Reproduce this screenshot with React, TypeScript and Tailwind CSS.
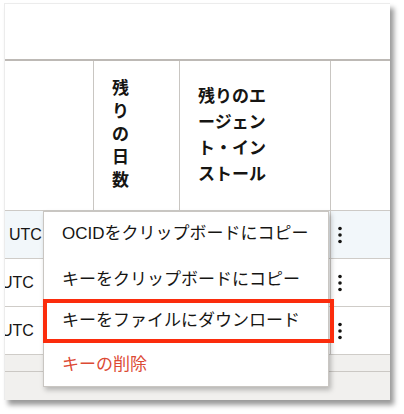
import React from 'react';

const font = "font-['Liberation_Sans','Noto_Sans_CJK_JP',sans-serif]";

function Kebab() {
  return (
    <svg width="6" height="18" viewBox="0 0 6 18" className="text-[#161513]">
      <circle cx="3" cy="2.5" r="1.8" fill="currentColor" />
      <circle cx="3" cy="9" r="1.8" fill="currentColor" />
      <circle cx="3" cy="15.5" r="1.8" fill="currentColor" />
    </svg>
  );
}

const rows = [
  { bg: 'bg-[#f2f7fa]', shift: 'pl-[4px]' },
  { bg: 'bg-white', shift: 'ml-[-4px]' },
  { bg: 'bg-white', shift: 'ml-[-4px]' },
];

export default function App() {
  return (
    <div className={`w-[404px] h-[414px] bg-white pl-[4px] pt-[3px] text-[#161513] ${font}`}>
      <div className="relative w-[386px] h-[397px] overflow-hidden bg-white border-l border-t border-[#ececec] shadow-[4px_5px_5px_rgba(0,0,0,0.4)]">
        {/* toolbar area */}
        <div className="h-[57px] border-b-2 border-[#bdb9b5]" />

        {/* header row */}
        <div className="flex h-[150px] border-b border-[#cdcac6]">
          <div className="w-[89px] border-r border-[#c9c6c2]" />
          <div className="w-[86px] border-r border-[#c9c6c2] flex items-center pl-[18px]">
            <div className="w-[17px] text-[17px] leading-[23px] font-bold -mt-[3px]">
              {['残', 'り', 'の', '日', '数'].map((c) => (
                <div key={c}>{c}</div>
              ))}
            </div>
          </div>
          <div className="w-[151px] border-r border-[#c9c6c2] flex items-center pl-[18px]">
            <div className="text-[17px] leading-[26px] font-bold">
              <div>残りのエ</div>
              <div>ージェン</div>
              <div>ト・イン</div>
              <div>ストール</div>
            </div>
          </div>
          <div className="flex-1" />
        </div>

        {/* body rows */}
        {rows.map((r, i) => (
          <div key={i} className={`flex h-[48px] border-b border-[#cfccc8] ${r.bg}`}>
            <div className="w-[89px] flex items-center overflow-hidden">
              <span className={`text-[16px] whitespace-nowrap ${r.shift}`}>UTC</span>
            </div>
            <div className="w-[86px]" />
            <div className="w-[151px] border-r border-[#cfccc8]" />
            <div className="flex-1 flex items-center pl-[6px]">
              <Kebab />
            </div>
          </div>
        ))}

        {/* footer area */}
        <div className="h-[17px] bg-[#f1f0ee] border-b border-[#cbc8c4]" />
        <div className="h-[30px] bg-[#f1f0ee]" />

        {/* action menu */}
        <div className="absolute left-[38px] top-[207px] w-[286px] bg-white border border-[#c9c6c2] shadow-[2px_3px_5px_rgba(0,0,0,0.25)] text-[17px]">
          <div className="h-[43px] flex items-center pl-[18px] whitespace-nowrap">OCIDをクリップボードにコピー</div>
          <div className="h-[44px] pt-[6px] flex items-center pl-[18px] whitespace-nowrap">キーをクリップボードにコピー</div>
          <div className="-ml-[1px] w-[291px] h-[44px] border-4 border-[#fb2c0c] flex items-center pl-[15px] whitespace-nowrap">
            キーをファイルにダウンロード
          </div>
          <div className="h-[43px] flex items-center pl-[18px] text-[#dc4a34] whitespace-nowrap">キーの削除</div>
        </div>
      </div>
    </div>
  );
}
